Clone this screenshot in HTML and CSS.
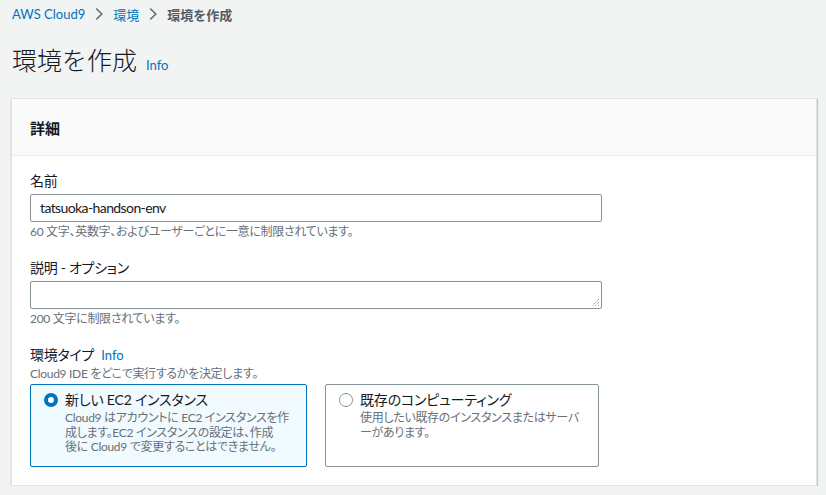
FILE: index.html
```html
<!DOCTYPE html>
<html lang="ja">
<head>
<meta charset="utf-8">
<link rel="stylesheet" href="styles.css">
</head>
<body>
<div class="page">
  <nav class="crumbs">
    <a class="link" href="#">AWS Cloud9</a>
    <svg class="chev" width="8" height="14" viewBox="0 0 8 14"><path d="M1.2 1.5 L6.8 7 L1.2 12.5" fill="none" stroke="#687078" stroke-width="1.7"/></svg>
    <a class="link" href="#">環境</a>
    <svg class="chev" width="8" height="14" viewBox="0 0 8 14"><path d="M1.2 1.5 L6.8 7 L1.2 12.5" fill="none" stroke="#687078" stroke-width="1.7"/></svg>
    <span class="current">環境を作成</span>
  </nav>
  <header class="title-row">
    <h1 class="title">環境を作成</h1>
    <a class="link info" href="#">Info</a>
  </header>
  <section class="card">
    <div class="card-head"><h2 class="card-title">詳細</h2></div>
    <div class="card-body">
      <div class="field">
        <label class="label">名前</label>
        <div class="input">tatsuoka-handson-env</div>
        <div class="hint">60 文字、英数字、およびユーザーごとに一意に制限されています。</div>
      </div>
      <div class="field">
        <label class="label">説明 - オプション</label>
        <div class="input textarea">
          <svg class="grip" width="10" height="10" viewBox="0 0 10 10"><path d="M9 2 L2 9 M9 5 L5 9 M9 8 L8 9" stroke="#777" stroke-width="1" stroke-dasharray="1 1"/></svg>
        </div>
        <div class="hint">200 文字に制限されています。</div>
      </div>
      <div class="field">
        <div class="label">環境タイプ <a class="link info-s" href="#">Info</a></div>
        <div class="hint sub">Cloud9 IDE をどこで実行するかを決定します。</div>
        <div class="tiles">
          <div class="tile selected">
            <span class="radio on"></span>
            <div class="tile-text">
              <div class="tile-title">新しい EC2 インスタンス</div>
              <div class="tile-desc">Cloud9 はアカウントに EC2 インスタンスを作<br>成します。EC2 インスタンスの設定は、作成<br>後に Cloud9 で変更することはできません。</div>
            </div>
          </div>
          <div class="tile">
            <span class="radio"></span>
            <div class="tile-text">
              <div class="tile-title">既存のコンピューティング</div>
              <div class="tile-desc">使用したい既存のインスタンスまたはサーバ<br>ーがあります。</div>
            </div>
          </div>
        </div>
      </div>
    </div>
  </section>
</div>
</body>
</html>
```
FILE: styles.css
```css
html, body {
  margin: 0;
  padding: 0;
  background: #f2f3f3;
}
body {
  font-family: "Lato", "Noto Sans CJK JP", sans-serif;
  color: #16191f;
  font-size: 14px;
}
.page {
  padding: 3px 9px 0 11px;
}
.link {
  color: #0073bb;
  text-decoration: none;
}
.crumbs {
  display: flex;
  align-items: center;
  gap: 10px;
  height: 22px;
  font-size: 13px;
  padding-left: 1px;
}
.chev { display: block; }
.current {
  color: #545b64;
  font-weight: 700;
}
.title-row {
  display: flex;
  align-items: baseline;
  gap: 9px;
  margin-top: 18px;
  padding-left: 1px;
}
.title {
  margin: 0;
  font-size: 25px;
  font-weight: 300;
  line-height: 34px;
}
.info { font-size: 13px; }
.card {
  margin-top: 21px;
  background: #fff;
  border: 1px solid #dfe3e3;
  box-shadow: 0 1px 1px rgba(0,28,36,0.3), 1px 1px 1px rgba(0,28,36,0.15);
  width: 804px;
}
.card-head {
  background: #fafafa;
  border-bottom: 1px solid #eaeded;
  height: 56px;
  display: flex;
  align-items: center;
  padding: 0 18px;
}
.card-title {
  margin: 0;
  font-size: 15px;
  font-weight: 700;
}
.card-body {
  padding: 14px 18px 18px;
  display: flex;
  flex-direction: column;
  gap: 17px;
}
.field { width: 572px; }
.label {
  display: block;
  font-size: 14px;
  line-height: 22px;
  margin-bottom: 2px;
  font-feature-settings: "palt";
  letter-spacing: -0.3px;
}
.input {
  box-sizing: border-box;
  height: 28px;
  border: 1px solid #879596;
  border-radius: 2px;
  padding: 0 9px;
  font-size: 14px;
  line-height: 26px;
  letter-spacing: -0.6px;
  background: #fff;
}
.textarea { position: relative; }
.grip {
  position: absolute;
  right: 1px;
  bottom: 1px;
}
.hint {
  font-size: 12px;
  color: #687078;
  line-height: 16px;
  margin-top: 2px;
  font-feature-settings: "palt";
  letter-spacing: -0.3px;
}
.hint.sub { margin-top: -2px; }
.info-s { font-size: 13px; margin-left: 4px; letter-spacing: 0; }
.tiles {
  display: grid;
  grid-template-columns: 277px 274px;
  gap: 18px;
  margin-top: 2px;
}
.tile {
  box-sizing: border-box;
  height: 83px;
  border: 1px solid #879596;
  border-radius: 2px;
  padding: 4px 6px 0 13px;
  display: flex;
  gap: 7px;
}
.tile.selected {
  background: #f1faff;
  border-color: #0073bb;
}
.radio {
  flex: none;
  box-sizing: border-box;
  width: 14px;
  height: 14px;
  border-radius: 50%;
  border: 1px solid #879596;
  margin-top: 4px;
  background: #fff;
}
.radio.on {
  border: 4px solid #0073bb;
}
.tile-title {
  font-size: 14px;
  line-height: 22px;
  font-feature-settings: "palt";
  letter-spacing: -0.2px;
}
.tile-desc {
  font-size: 12px;
  line-height: 14.5px;
  color: #687078;
  white-space: nowrap;
  font-feature-settings: "palt";
  letter-spacing: -0.3px;
}
```
